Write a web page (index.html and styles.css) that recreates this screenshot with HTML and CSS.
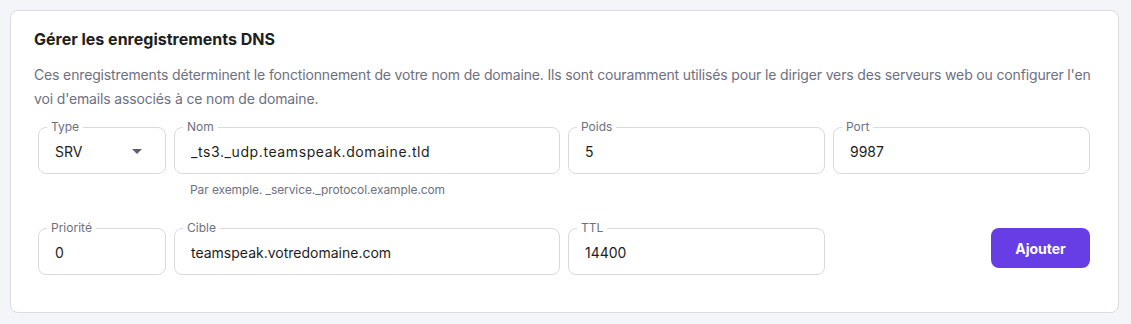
FILE: index.html
```html
<!DOCTYPE html>
<html lang="fr">
  <head>
    <meta charset="UTF-8" />
    <meta name="viewport" content="width=device-width, initial-scale=1.0" />
    <title>DNS</title>
    <link rel="stylesheet" href="styles.css">
  </head>

  <body>
    <div class="card">
      <h2 class="card-title">Gérer les enregistrements DNS</h2>
      <p class="card-text">Ces enregistrements déterminent le fonctionnement de votre nom de domaine. Ils sont couramment utilisés pour le diriger vers des serveurs web ou configurer l'en<br />voi d'emails associés à ce nom de domaine.</p>

      <form class="dns-form">
        <div class="row">
          <fieldset class="field">
            <legend>Type</legend>
            <div class="select">
              <span>SRV</span>
              <span class="caret"></span>
            </div>
          </fieldset>
          <div class="col">
            <fieldset class="field">
              <legend>Nom</legend>
              <input type="text" class="wide-value" value="_ts3._udp.teamspeak.domaine.tld" />
            </fieldset>
            <div class="hint">Par exemple. _service._protocol.example.com</div>
          </div>
          <fieldset class="field">
            <legend>Poids</legend>
            <input type="text" value="5" />
          </fieldset>
          <fieldset class="field">
            <legend>Port</legend>
            <input type="text" value="9987" />
          </fieldset>
        </div>

        <div class="row">
          <fieldset class="field">
            <legend>Priorité</legend>
            <input type="text" value="0" />
          </fieldset>
          <fieldset class="field">
            <legend>Cible</legend>
            <input type="text" value="teamspeak.votredomaine.com" />
          </fieldset>
          <fieldset class="field">
            <legend>TTL</legend>
            <input type="text" value="14400" />
          </fieldset>
          <div class="actions">
            <button type="button" class="btn-add">Ajouter</button>
          </div>
        </div>
      </form>
    </div>
  </body>
</html>
```
FILE: styles.css
```css
body {
  margin: 0;
  padding: 10px 12px 12px 10px;
  background-color: #f4f5f9;
  font-family: Inter, "Liberation Sans", sans-serif;
}

.card {
  background-color: #fff;
  border: 1px solid #dadce0;
  border-radius: 8px;
  padding: 16px 23px 37px 23px;
}

.card-title {
  margin: 0;
  font-size: 16px;
  line-height: 24px;
  font-weight: 700;
  color: #1d1e20;
}

.card-text {
  margin: 12px 0 8px;
  font-size: 14px;
  line-height: 24px;
  letter-spacing: -0.15px;
  color: #6d7081;
}

.dns-form {
  padding: 0 4px;
}

.row {
  display: grid;
  grid-template-columns: 128px 386px 257px 257px;
  column-gap: 8px;
  align-items: start;
}

.row + .row {
  margin-top: 22px;
}

.field {
  margin: 0;
  padding: 0 8px 6px;
  border: 1px solid #d8dae0;
  border-radius: 8px;
  min-width: 0;
}

.field legend {
  padding: 0 4px;
  font-size: 12px;
  line-height: 16px;
  color: #6d7081;
}

.field input,
.select {
  box-sizing: border-box;
  width: 100%;
  height: 32px;
  padding: 0 8px;
  border: none;
  outline: none;
  background: transparent;
  font-family: inherit;
  font-size: 14px;
  color: #1d1e20;
}

.field .wide-value {
  letter-spacing: 0.6px;
}

.select {
  display: flex;
  align-items: center;
  justify-content: space-between;
  padding-right: 15px;
}

.caret {
  width: 0;
  height: 0;
  border-left: 5.5px solid transparent;
  border-right: 5.5px solid transparent;
  border-top: 5.5px solid #5c5e6e;
}

.hint {
  margin-top: 8px;
  padding-left: 16px;
  font-size: 12px;
  line-height: 16px;
  letter-spacing: -0.1px;
  color: #6d7081;
}

.actions {
  display: flex;
  justify-content: flex-end;
  padding-top: 8px;
}

.btn-add {
  width: 99px;
  height: 40px;
  border: none;
  border-radius: 8px;
  background-color: #673de6;
  color: #fff;
  font-family: inherit;
  font-size: 14px;
  font-weight: 700;
  cursor: pointer;
}
```
